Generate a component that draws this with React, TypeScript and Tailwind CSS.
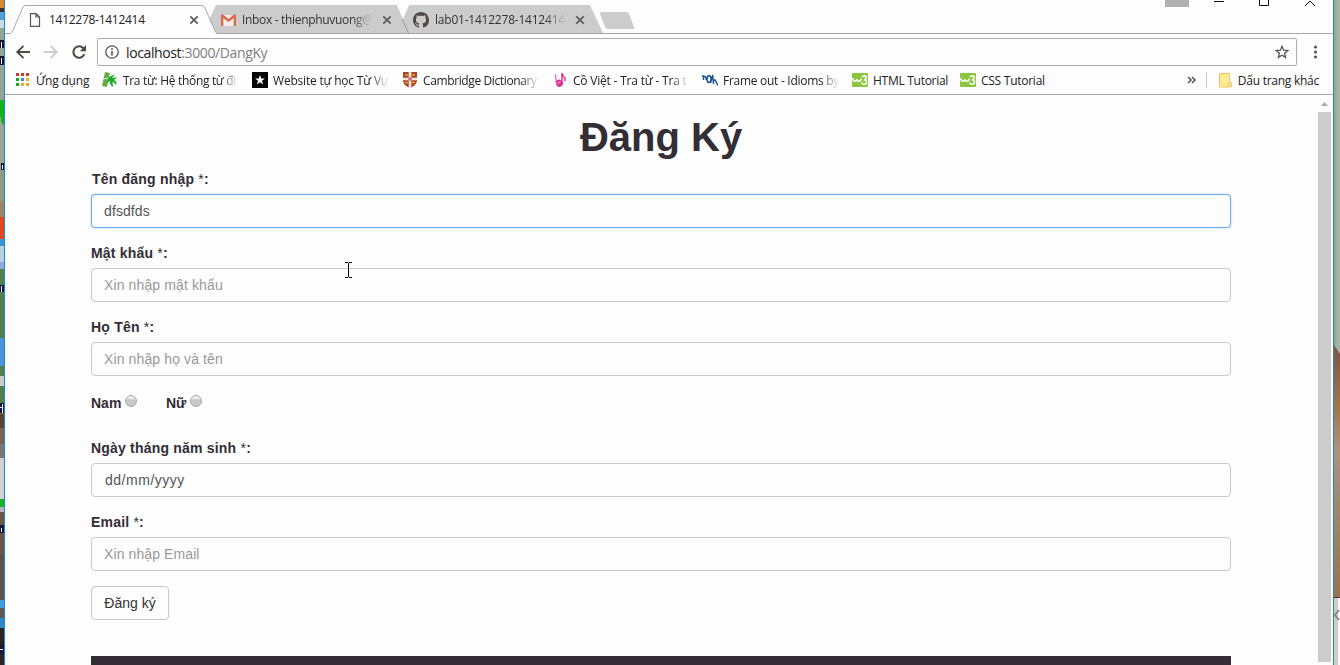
import type { ReactNode } from "react";

function DesktopLeft() {
  const bands: [number, number, string][] = [
    [0, 8, "#d98a2b"], [8, 4, "#3a3038"], [12, 8, "#4fa0dc"], [20, 8, "#c8dce8"], [28, 72, "#94a594"],
    [100, 25, "#10b41c"], [125, 40, "#9aa691"], [171, 30, "#8f9a80"], [201, 16, "#9c8468"], [217, 22, "#dd4a20"],
    [239, 7, "#3d93d8"], [246, 16, "#b6d3e4"], [262, 7, "#8fa8dc"], [269, 69, "#52814f"], [338, 28, "#4794dc"],
    [366, 10, "#4f7f4c"], [376, 10, "#c9cccb"], [386, 28, "#4f7f4c"], [414, 14, "#5c4030"], [428, 16, "#7e6250"],
    [444, 14, "#777776"], [458, 41, "#d2d2d6"], [499, 8, "#13b522"], [507, 5, "#b4b4bc"], [512, 42, "#6b564a"],
    [554, 46, "#5d5349"], [600, 8, "#3f9be2"], [608, 10, "#5e5752"], [618, 10, "#2f87ce"], [628, 37, "#2c2422"],
  ];
  return (
    <svg width="4" height="665" className="block shrink-0" shapeRendering="crispEdges" aria-hidden="true">
      <rect width="4" height="665" fill="#94a594" />
      {bands.map(([y, h, c]) => (
        <rect key={y} x="0" y={y} width="4" height={h} fill={c} />
      ))}
      <path d="M4 100v25q-3-6-4-10v-15z" fill="#10b41c" />
      <path d="M0 115q1 7 4 12h-4z" fill="#9aa691" />
      <path d="M0 40h4v8h-4zM0 56h4v9h-4zM1 163h3v7h-3zM0 285h4v7h-4zM0 403h4v10h-4zM0 525h4v8h-4zM0 645h4v9h-4z" fill="#161637" />
      <path d="M1 42h1v6h-1zM1 58h1v6h-1zM2 165h1v4h-1zM1 286h1v6h-1zM2 404h1v9h-1zM0 407h3v1h-3zM1 528h1v4h-1zM0 649h3v1h-3z" fill="#f3f3f3" />
    </svg>
  );
}

function DesktopRight() {
  return (
    <svg width="6" height="665" className="block shrink-0" aria-hidden="true">
      <defs>
        <linearGradient id="wall" x2="0" y2="1">
          <stop offset="0" stopColor="#7a5548" />
          <stop offset=".25" stopColor="#a07650" />
          <stop offset=".42" stopColor="#a99480" />
          <stop offset=".6" stopColor="#9a8c75" />
          <stop offset="1" stopColor="#957450" />
        </linearGradient>
      </defs>
      <rect width="6" height="665" fill="#a5b1a3" />
      <rect width="2" height="345" fill="#96aa91" />
      <rect x="5" width="1" height="345" fill="#a4c4a1" />
      <path d="M0 345l6 9v244h-6z" fill="url(#wall)" />
      <rect y="597" width="6" height="1" fill="#433830" />
      <rect y="598" width="6" height="67" fill="#cdcdcd" />
      <rect x="4" y="598" width="2" height="67" fill="#f7f7f7" />
      <path d="M5 610l-4 5 4 5" fill="none" stroke="#858585" strokeWidth="2" />
    </svg>
  );
}

function Close() {
  return (
    <svg width="10" height="10" viewBox="0 0 10 10" className="block shrink-0">
      <path d="M1.3 1.3l7.4 7.4M8.7 1.3L1.3 8.7" stroke="#5a5a5a" strokeWidth="1.7" />
    </svg>
  );
}

function Gmail() {
  return (
    <svg width="15" height="12" viewBox="0 0 15 12" className="block shrink-0">
      <path d="M1 1h13v11H1z" fill="#f2ece9" />
      <path d="M0 1.5C0 .5 1 0 2 .6L7.5 5 13 .6c1-.6 2-.1 2 .9V12h-2.3V4L7.5 8 2.3 4v8H0z" fill="#dc6850" />
    </svg>
  );
}

function GitHub() {
  return (
    <svg width="16" height="16" viewBox="0 0 16 16" className="block shrink-0">
      <path
        fill="#514843"
        d="M8 0C3.58 0 0 3.58 0 8c0 3.54 2.29 6.53 5.47 7.59.4.07.55-.17.55-.38 0-.19-.01-.82-.01-1.49-2.01.37-2.53-.49-2.69-.94-.09-.23-.48-.94-.82-1.13-.28-.15-.68-.52-.01-.53.63-.01 1.08.58 1.23.82.72 1.21 1.87.87 2.33.66.07-.52.28-.87.51-1.07-1.78-.2-3.64-.89-3.64-3.95 0-.87.31-1.59.82-2.15-.08-.2-.36-1.02.08-2.12 0 0 .67-.21 2.2.82.64-.18 1.32-.27 2-.27s1.36.09 2 .27c1.53-1.04 2.2-.82 2.2-.82.44 1.1.16 1.92.08 2.12.51.56.82 1.27.82 2.15 0 3.07-1.87 3.75-3.65 3.95.29.25.54.73.54 1.48 0 1.07-.01 1.93-.01 2.2 0 .21.15.46.55.38A8.01 8.01 0 0 0 16 8c0-4.42-3.58-8-8-8z"
      />
    </svg>
  );
}

function TabStrip() {
  return (
    <div className="relative h-[34px] shrink-0">
      <svg width="1328" height="34" viewBox="5 0 1328 34" className="absolute inset-0 block" aria-hidden="true">
        <path d="M409 5H590L603 33H409L402 20Z" fill="#cccccc" />
        <path d="M216 5H397L409 33H216L209 20Z" fill="#cccccc" />
        <path d="M397 5L403 19L409 5Z" fill="#fdfdfd" />
        <path d="M402 19L408.500 33" stroke="#999" fill="none" />
        <path d="M216 33.500H1333" stroke="#a8a8a8" />
        <path d="M5 33.500H10.500Q12 33 13 30L23 7Q24 5.500 25 5.500H202Q204 5.500 205 8L215 31Q216 33.500 218 33.500" fill="#fdfdfd" stroke="#a8a8a8" />
        <path d="M602 12H626Q628 12 629 14L634 27Q635 29 633 29H608Q606 29 605 27L600 14Q599 12 602 12Z" fill="#cccccc" />
        <rect x="1165" y="0" width="24" height="7" fill="#b0b0b0" />
        <path d="M1214 1.500H1224M1259.500 0V5.500H1268.500V0M1305 6L1310 1L1315 6" fill="none" stroke="#111" />
      </svg>
      <div className="relative flex h-full items-center pt-[6px] pl-[24px] font-['Open_Sans',sans-serif] text-[12px] text-[#333]">
        <div className="flex w-[192px] items-center">
          <svg width="12" height="14" viewBox="0 0 12 14" className="block shrink-0">
            <path d="M1.500.6H7L10.500 4V13.400H1.500zM7 .6V4h3.500" fill="#fff" stroke="#5c5651" strokeWidth="1.200" />
          </svg>
          <span className="ml-[8px] w-[140px] tracking-[-0.28px] whitespace-nowrap text-[#222]">1412278-1412414</span>
          <Close />
        </div>
        <div className="flex w-[192px] items-center">
          <Gmail />
          <span className="ml-[6px] w-[130px] tracking-[-0.32px] whitespace-nowrap [mask-image:linear-gradient(to_right,black_85%,transparent)]">Inbox - thienphuvuong@</span>
          <span className="ml-[10px]"><Close /></span>
        </div>
        <div className="flex items-center">
          <GitHub />
          <span className="ml-[6px] w-[130px] tracking-[-0.22px] whitespace-nowrap [mask-image:linear-gradient(to_right,black_85%,transparent)]">lab01-1412278-1412414</span>
          <span className="ml-[10px]"><Close /></span>
        </div>
      </div>
    </div>
  );
}

function Toolbar() {
  return (
    <div className="flex h-[32px] shrink-0 items-center pt-[4px] pl-[10px]">
      <svg width="76" height="18" viewBox="15 0 76 18" className="block shrink-0">
        <g fill="none" strokeWidth="1.900">
          <path d="M30 9H17.500M23.500 2.800L17.300 9L23.500 15.200" stroke="#514944" />
          <path d="M44 9H56.500M50.500 2.800L56.700 9L50.500 15.200" stroke="#cdcdcd" />
          <path d="M84.300 11.200A5.700 5.700 0 1 1 83.300 5.200" stroke="#514944" strokeWidth="2.100" />
        </g>
        <path d="M86 2V8.200H79.800Z" fill="#514944" />
      </svg>
      <div className="ml-[6px] flex h-[28px] w-[1200px] items-center rounded-[2px] border border-[#adadad] bg-[#fdfdfd] px-[7px] font-['Open_Sans',sans-serif] text-[14px]">
        <svg width="14" height="14" viewBox="0 0 14 14" className="block shrink-0">
          <circle cx="7" cy="7" r="6.200" fill="none" stroke="#555" strokeWidth="1.300" />
          <path d="M7 6V10.500M7 3.300V4.900" stroke="#555" strokeWidth="1.600" />
        </svg>
        <span className="ml-[7px] flex-1 tracking-[-0.38px] text-[#222]">
          localhost<span className="text-[#808080]">:3000/DangKy</span>
        </span>
        <svg width="14" height="14" viewBox="0 0 14 14" className="block shrink-0">
          <path d="M7 1.300L8.600 5.200L12.900 5.500L9.600 8.200L10.600 12.400L7 10.200L3.400 12.400L4.400 8.200L1.100 5.500L5.400 5.200Z" fill="none" stroke="#555" strokeWidth="1.300" />
        </svg>
      </div>
      <svg width="4" height="14" viewBox="0 0 4 14" className="ml-[16px] block shrink-0" fill="#544d48">
        <circle cx="2.500" cy="2" r="1.500" /><circle cx="2.500" cy="7" r="1.500" /><circle cx="2.500" cy="12" r="1.500" />
      </svg>
    </div>
  );
}

function Bookmark({ icon, label, width, text }: { icon: ReactNode; label: string; width: string; text: string }) {
  return (
    <div className={"flex shrink-0 items-center " + width}>
      <svg width="16" height="16" viewBox="0 0 16 16" className="mr-[5px] block shrink-0">{icon}</svg>
      <span className={"pt-px whitespace-nowrap " + text}>{label}</span>
    </div>
  );
}

const fade = "w-[116px] [mask-image:linear-gradient(to_right,black_84%,transparent)] ";

const w3 = (
  <>
    <rect y="1" width="16" height="14" rx="1" fill="#8cc63f" />
    <path d="M.8 6Q1 9.500 3 9.300Q4.800 9 4.800 7Q5 9.500 7 9.300Q9 9 9 6.500M10 5Q10.800 3.700 12.500 3.700Q14.500 4 14.300 5.800Q14 7.600 11.800 7.700Q14.800 7.800 14.500 10.500Q14 13 11 12Q9.800 11.500 10 10.300" fill="none" stroke="#fff" strokeWidth="1.500" />
  </>
);

function Bookmarks() {
  return (
    <div className="flex h-[29px] shrink-0 items-center border-b border-[#a8a8a8] pl-[10px] font-['Open_Sans',sans-serif] text-[12px] text-[#222]">
      <Bookmark width="w-[87px]" text="tracking-[-0.2px]" label="Ứng dụng" icon={
        <>
          <path d="M1 1h3v3h-3zM6 1h3v3h-3zM11 1h3v3h-3z" fill="#c93c26" />
          <path d="M1 6h3v3h-3zM1 11h3v3h-3z" fill="#18a52a" />
          <path d="M6 6h3v3h-3z" fill="#3b86ee" />
          <path d="M11 6h3v3h-3zM6 11h3v3h-3zM11 11h3v3h-3z" fill="#edac22" />
        </>
      } />
      <Bookmark width="w-[150px]" text={fade + "tracking-[-0.32px]"} label="Tra từ: Hệ thống từ đi" icon={
        <>
          <path d="M3 0L8 1L5 15L0 14Z" fill="#6aa84c" />
          <path d="M1 7L6.500 6" stroke="#d6edc9" />
          <path d="M7 5L13 2L10 6L15 5L12 8Q15 10 14.500 13L10.500 9.500L11 15Q7.500 13 8 9L5 11Z" fill="#18ad28" />
        </>
      } />
      <Bookmark width="w-[150px]" text={fade + "tracking-[-0.2px]"} label="Website tự học Từ Vự" icon={
        <>
          <rect width="16" height="16" fill="#050505" />
          <path d="M8 3L9.300 6.500H13L10 8.700L11.100 12.500L8 10.200L4.900 12.500L6 8.700L3 6.500H6.700Z" fill="#fff" />
        </>
      } />
      <Bookmark width="w-[150px]" text={fade + "tracking-[-0.38px]"} label="Cambridge Dictionary" icon={
        <>
          <path d="M1 0H15V9Q14 14 8 16Q2 14 1 9Z" fill="#a9462b" />
          <path d="M8 0V16M1 7H15" stroke="#f4e8e0" strokeWidth="2.600" />
          <path d="M3 3h3M10 3h3M3 10.500h3M10 10.500h3" stroke="#e5a22e" strokeWidth="1.700" />
          <path d="M8 5V9M6 7H10" stroke="#c93d32" />
        </>
      } />
      <Bookmark width="w-[150px]" text={fade + "tracking-[-0.2px]"} label="Cồ Việt - Tra từ - Tra t" icon={
        <>
          <path d="M3.500 2L4 10" stroke="#e77cbd" strokeWidth="1.500" />
          <path d="M9.500 10Q9.500 7.500 7 7.500Q4 7.700 4 11Q4.500 15 7.500 15Q11 14.500 11 10.500Z" fill="#df2f92" />
          <path d="M8.500 10Q6 9.500 6 12" fill="none" stroke="#f7b8dc" />
          <path d="M10 12V1Q10.500 4 13 6V9" fill="none" stroke="#d91584" strokeWidth="1.300" />
        </>
      } />
      <Bookmark width="w-[150px]" text={fade + "tracking-[-0.28px]"} label="Frame out - Idioms by" icon={
        <path d="M0 4H1.500V8M1.500 5Q4 3 4.200 8M7.500 3.500Q5 3.500 5 7Q5 10.500 7 10.500Q9 10 9 6.500Q9 4 7 3.500M8.500 11L10.700 3L11.500 12M11 9L13 8L16 13.500" fill="none" stroke="#174f94" strokeWidth="1.400" />
      } />
      <Bookmark width="w-[108px]" text="tracking-[-0.28px]" label="HTML Tutorial" icon={w3} />
      <Bookmark width="w-[90px]" text="tracking-[-0.26px]" label="CSS Tutorial" icon={w3} />
      <div className="ml-auto flex items-center pr-[14px]">
        <svg width="10" height="8" viewBox="0 0 10 8" className="block">
          <path d="M1 1L4 4L1 7M5 1L8 4L5 7" fill="none" stroke="#555" strokeWidth="1.600" />
        </svg>
        <span className="ml-[9px] h-[16px] w-px bg-[#c4c4c4]" />
        <svg width="13" height="15" viewBox="0 0 13 15" className="ml-[12px] block">
          <path d="M.5.500H10.500V9.500H12.300V14H.5Z" fill="#ffe995" stroke="#f0c265" />
          <path d="M9.500 10V13" stroke="#f0c265" />
        </svg>
        <span className="ml-[6px] pt-px tracking-[-0.26px] whitespace-nowrap">Dấu trang khác</span>
      </div>
    </div>
  );
}

function Label({ children, first }: { children: string; first?: boolean }) {
  return (
    <div className={"mb-[5px] h-[20px] text-[14px] leading-[20px] tracking-[0.2px] " + (first ? "pl-px" : "")}>
      <b>{children}</b> *<b>:</b>
    </div>
  );
}

function Box({ children, tone }: { children: string; tone: string }) {
  return (
    <div className={"mb-[15px] flex h-[34px] items-center rounded-[4px] border bg-[#fdfdfd] text-[14px] leading-[20px] " + tone}>
      {children}
    </div>
  );
}

function Radio() {
  return (
    <span className="mb-[5px] ml-[4px] block h-[12px] w-[12px] rounded-full border border-[#a9a9a9] bg-linear-to-b from-[#f0f0f0] from-20% to-[#c9c9c9] to-40%" />
  );
}

function Page() {
  return (
    <main className="flex min-h-0 flex-1 font-['Liberation_Sans',Arial,sans-serif] text-[#332d35]">
      <div className="flex-1 overflow-hidden pt-[19px] pl-[86px]">
        <div className="w-[1140px]">
          <h1 className="mb-[9px] h-[46px] text-center text-[40px] leading-[46px] font-bold">Đăng Ký</h1>
          <Label first>Tên đăng nhập</Label>
          <Box tone="border-[#66afe9] text-[#555] px-[12px] tracking-[0.1px] shadow-[0_0_2px_rgba(102,175,233,0.6)]">dfsdfds</Box>
          <Label>Mật khẩu</Label>
          <Box tone="border-[#c9c9c9] text-[#999] px-[12px] tracking-[0.12px]">Xin nhập mật khẩu</Box>
          <Label>Họ Tên</Label>
          <Box tone="border-[#c9c9c9] text-[#999] px-[12px] tracking-[0.12px]">Xin nhập họ và tên</Box>
          <div className="flex h-[47px] items-start text-[14px] leading-[20px] font-bold">
            <div className="flex h-[24px] w-[75px] items-center">Nam<Radio /></div>
            <div className="flex h-[24px] items-center">Nữ<Radio /></div>
          </div>
          <Label>Ngày tháng năm sinh</Label>
          <Box tone="border-[#c9c9c9] text-[#555] px-[13px] tracking-[0.52px]">dd/mm/yyyy</Box>
          <Label>Email</Label>
          <Box tone="border-[#c9c9c9] text-[#999] px-[12px] tracking-[0.1px]">Xin nhập Email</Box>
          <button type="button" className="block h-[34px] w-[78px] rounded-[4px] border border-[#c9c9c9] text-[14px] leading-[20px] text-[#333]">Đăng ký</button>
          <div className="mt-[36px] h-[9px] bg-[#352d35]" />
        </div>
      </div>
      <div className="flex w-[15px] shrink-0 flex-col items-start pb-[3px]">
        <svg width="13" height="17" viewBox="0 0 13 17" className="block shrink-0">
          <path d="M3 11L6.500 7L10 11Z" fill="#a8a8a8" />
        </svg>
        <div className="w-[13px] flex-1 bg-[#cccccc]" />
      </div>
    </main>
  );
}

export default function App() {
  return (
    <div className="relative flex h-[665px] w-[1340px] overflow-hidden">
      <DesktopLeft />
      <div className="flex w-[1330px] shrink-0 flex-col border-x border-[#2484cf] bg-[#fdfdfd]">
        <TabStrip />
        <Toolbar />
        <Bookmarks />
        <Page />
      </div>
      <DesktopRight />
      <svg width="7" height="16" viewBox="0 0 7 16" className="absolute top-[262px] left-[345px] block" aria-hidden="true">
        <path d="M0 .500H3M4 .500H7M3.500 1V15M0 15.500H3M4 15.500H7" fill="none" stroke="#000" />
      </svg>
    </div>
  );
}
